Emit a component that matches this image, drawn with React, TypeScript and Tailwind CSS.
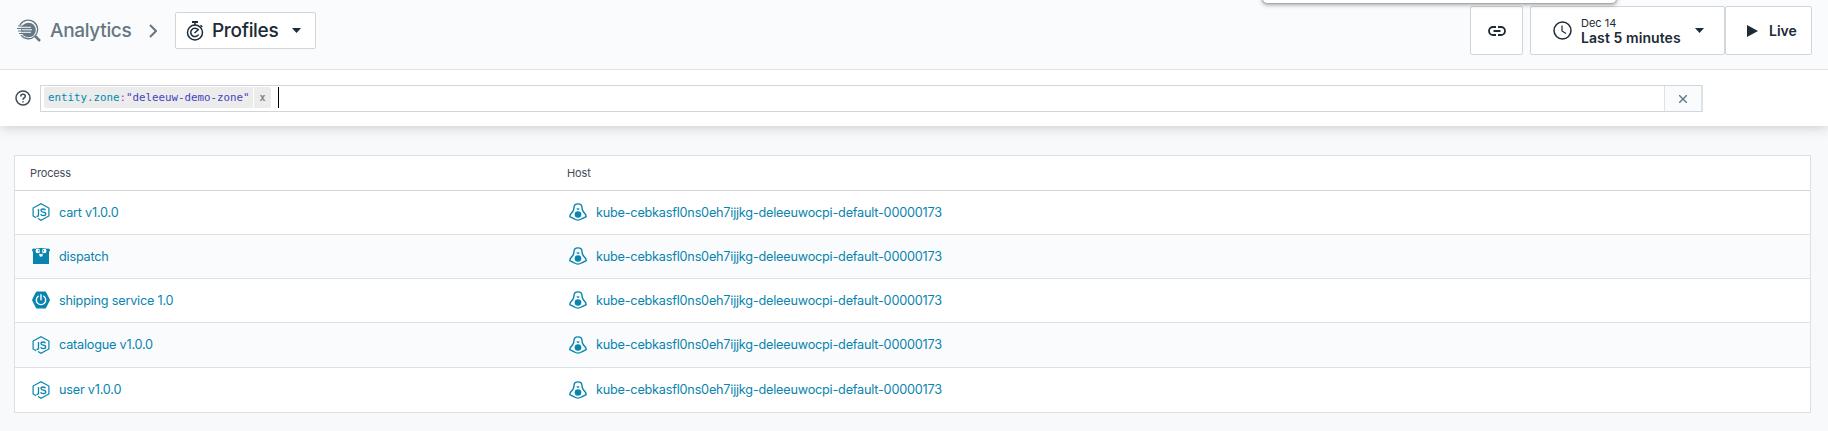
import React from "react";

const NodeIcon = () => (
  <svg className="size-[18px]" viewBox="0 0 18 18" fill="none" stroke="currentColor" strokeWidth="1.2">
    <path d="M4.200 14.700 1.100 12.900V5.100L9 .7l7.900 4.400v7.800L9 17.300l-3-1.700" />
    <path d="M6.500 6v6q0 1.600-2 1.200M13.500 7.300Q13 6 11.200 6 9 6 9 7.500 9 8.900 11.300 9.200 13.700 9.500 13.700 11 13.700 12.600 11.400 12.600 9 12.600 8.700 11.200" strokeWidth="1.300" />
  </svg>
);

const GopherIcon = () => (
  <svg className="size-[18px]" viewBox="0 0 18 18" fill="currentColor">
    <path d="M0 2.600Q1 1.200 3 1.700Q9 .2 15 1.700 17 1.200 18 2.600 17.900 4.300 17 4.800V17H1V4.800Q.1 4.300 0 2.600Z" />
    <g fill="#fff"><circle cx="5.800" cy="4" r="2.300" /><circle cx="12.200" cy="4" r="2.300" /><ellipse cx="9" cy="7.800" rx="1.800" ry="1.900" /></g>
    <circle cx="6.600" cy="3.800" r=".8" /><circle cx="11.400" cy="3.800" r=".8" /><ellipse cx="9" cy="6.600" rx="1.200" ry=".7" />
  </svg>
);

const SpringIcon = () => (
  <svg className="size-[18px]" viewBox="0 0 18 18">
    <path d="M5 .5h8q.7 0 1 .6L17.700 8.200q.4.800 0 1.600L14 16.900q-.3.600-1 .6H5q-.7 0-1-.6L.3 9.800Q-.1 9 .3 8.200L4 1.100Q4.300.5 5 .5Z" fill="currentColor" />
    <path d="M6.200 5.200a4.700 4.700 0 1 0 5.600 0M9 3.800v5" fill="none" stroke="#fff" strokeWidth="1.400" strokeLinecap="round" />
  </svg>
);

const HostIcon = () => (
  <svg className="size-[18px]" viewBox="0 0 18 18" fill="none" stroke="currentColor" strokeWidth="1.400">
    <path d="M5.200 15.800.8 13.600 1.300 11.600 3.800 8.500Q5 6.500 5 4.500 5 .9 9 .9t4 3.600Q13 6.500 14.200 8.500l2.500 3.100.5 2-4.400 2.200Q9 18.500 5.200 15.800Z" />
    <circle cx="9" cy="11.500" r="3.300" fill="currentColor" stroke="none" />
    <path d="M7.100 5.700q1.900-.8 3.800 0L9 7.200Z" fill="currentColor" stroke="none" />
  </svg>
);

const AnalyticsIcon = () => (
  <svg className="h-6 w-6" viewBox="0 0 24 24" fill="none" stroke="currentColor">
    <path d="M3 6.300A9.300 9.300 0 1 1 4 16.200" strokeWidth="1.300" />
    <circle cx="11.500" cy="11" r="7.300" fill="currentColor" stroke="none" />
    <path d="M5 8.300h9M5 10.800h10M5 13.300h9" stroke="#fafbfd" strokeWidth="1" />
    <path d="M1 7h5M0 9.500h6M1 12h5M2 14.500h5" strokeWidth="1.200" />
    <path d="m18 17 5 5" strokeWidth="2.500" />
  </svg>
);

const StopwatchIcon = () => (
  <svg className="h-5 w-[18px]" viewBox="0 0 18 20" fill="none" stroke="currentColor" strokeWidth="1.500">
    <circle cx="9" cy="11.500" r="7.500" />
    <path d="M6 1h6" strokeWidth="2" />
    <path d="M9 1v3M14.500 4.200l1.800 1.800" />
    <path d="M12 8.500A4.200 4.200 0 1 0 12.600 13.500M8.500 12l4.300-3.800" />
  </svg>
);

const Caret = () => (
  <svg className="h-[5px] w-[9px]" viewBox="0 0 9 5" fill="currentColor"><path d="M0 0h9L4.500 5Z" /></svg>
);

const rows = [
  { name: "cart v1.0.0", Icon: NodeIcon, style: "h-11 bg-white" },
  { name: "dispatch", Icon: GopherIcon, style: "h-11 bg-[#fafbfd]" },
  { name: "shipping service 1.0", Icon: SpringIcon, style: "h-11 bg-white" },
  { name: "catalogue v1.0.0", Icon: NodeIcon, style: "h-[45px] bg-[#fafbfd]" },
  { name: "user v1.0.0", Icon: NodeIcon, style: "h-11 bg-white" },
];

export default function App() {
  return (
    <div className="relative flex h-[431px] w-full flex-col overflow-hidden bg-[#f7f9fb] font-['Inter',sans-serif] text-[#1c2b36]">
      <div className="absolute -top-5 left-[1262px] z-20 h-6 w-[355px] rounded-[5px] border border-[#a5aaac] bg-white shadow-[0_1px_4px_rgba(0,0,0,0.35)]" />
      <header className="relative z-10 flex h-[70px] shrink-0 items-start border-b border-[#dfe3e6] bg-[#fafbfd] pr-4 pl-[17px]">
        <div className="mt-[18px] flex items-center text-[#667784]">
          <AnalyticsIcon />
          <span className="ml-[9px] w-[82px] pt-px text-[19px] leading-6 font-medium tracking-[-0.32px]">Analytics</span>
          <svg className="ml-[17px] h-[14px] w-2" viewBox="0 0 8 14" fill="none" stroke="currentColor" strokeWidth="2"><path d="m1 1 6 6-6 6" /></svg>
        </div>
        <button className="mt-3 ml-[18px] flex h-[37px] w-[141px] items-center rounded-[2px] border border-[#d2d6da] bg-white pl-[10px]">
          <StopwatchIcon />
          <span className="ml-[8px] w-[67px] text-left text-[19px] leading-6 font-medium tracking-[-0.32px]">Profiles</span>
          <span className="ml-[13px]"><Caret /></span>
        </button>
        <div className="mt-[6px] ml-auto flex">
          <button className="flex h-[49px] w-[53px] items-center justify-center rounded-[2px] border border-[#d2d6da] bg-white">
            <svg className="h-[10px] w-[18px]" viewBox="0 0 18 10" fill="none" stroke="currentColor" strokeWidth="1.800"><path d="M8 1H5a4 4 0 0 0 0 8h3M10 1h3a4 4 0 0 1 0 8h-3M5.500 5h7" /></svg>
          </button>
          <button className="ml-[7px] flex h-[49px] w-[195px] items-center rounded-[2px] border border-[#d2d6da] bg-white pl-[22px]">
            <svg className="size-[19px]" viewBox="0 0 19 19" fill="none" stroke="currentColor" strokeWidth="1.500"><circle cx="9.500" cy="9.500" r="8.500" /><path d="M9 4.500V10l4 2.500" strokeWidth="1.200" /></svg>
            <span className="ml-[9px] flex w-[100px] flex-col text-left whitespace-nowrap">
              <span className="text-[11px] leading-[14px]">Dec 14</span>
              <span className="text-[14px] leading-4 font-semibold tracking-[0.08px]">Last 5 minutes</span>
            </span>
            <span className="ml-[14px]"><Caret /></span>
          </button>
          <button className="flex h-[49px] w-[87px] items-center rounded-[2px] border border-[#d2d6da] bg-white pl-[21px]">
            <svg className="h-3 w-[11px]" viewBox="0 0 11 12" fill="currentColor"><path d="M0 0 11 6 0 12Z" /></svg>
            <span className="ml-[11px] text-[14px] font-semibold">Live</span>
          </button>
        </div>
      </header>
      <section className="flex h-14 shrink-0 items-start bg-white pt-[15px] pl-[15px] shadow-[0_0_12px_rgba(60,75,85,0.3)]">
        <svg className="mt-[5px] size-4" viewBox="0 0 16 16" fill="none" stroke="#3f4b55" strokeWidth="1.500"><circle cx="8" cy="8" r="7" /><path d="M5.700 6.500Q5.700 4.300 8 4.300t2.300 2Q10.300 7.300 9 8 8 8.600 8 9.800M8 11.200v1.400" /></svg>
        <div className="ml-[9px] flex h-[27px] w-[1663px] border border-r-2 border-[#d2d6da] border-r-[#dce4ea]">
          <div className="mt-px ml-[3px] flex h-[21px] items-center font-['DejaVu_Sans_Mono',monospace] text-[10.8px]">
            <span className="flex h-full w-[209px] items-center rounded-l-[2px] bg-[#ececec] pt-[2px] pl-1 whitespace-pre"><span className="text-[#008aae]">entity.zone</span><span className="text-[#a33bd0]">:</span><span className="text-[#4445bd]">"deleeuw-demo-zone"</span></span>
            <span className="ml-px flex h-full w-[17px] items-center justify-center rounded-r-[2px] bg-[#ececec] text-[10px] font-bold text-[#85898c]">x</span>
            <span className="ml-[7px] h-[21px] w-px bg-black" />
          </div>
          <div className="ml-auto flex w-[37px] items-center justify-center border-l border-[#dce4ea] bg-[#fafbfd]">
            <svg className="size-2" viewBox="0 0 8 8" stroke="#647580" strokeWidth="1.400"><path d="m0 0 8 8M8 0 0 8" /></svg>
          </div>
        </div>
      </section>
      <main className="mt-[29px] ml-[14px] w-[1797px] border border-[#dce1e5] bg-white">
        <div className="flex h-[35px] items-center border-b border-[#d2d6da] pt-px text-[11px] text-[#3f4b55]">
          <span className="w-[537px] pl-[15px] tracking-[-0.15px]">Process</span><span className="pl-[15px] tracking-[-0.1px]">Host</span>
        </div>
        {rows.map(({ name, Icon, style }) => (
          <div key={name} className={`flex items-center border-b border-[#dce1e5] text-[12.7px] tracking-[-0.22px] text-[#0884ae] last:border-b-0 ${style}`}>
            <div className="flex w-[537px] items-center gap-[9.500px] pl-[16.500px]"><Icon /><span>{name}</span></div>
            <div className="flex items-center gap-[9.500px] pl-[16.500px]"><HostIcon /><span>kube-cebkasfl0ns0eh7ijjkg-deleeuwocpi-default-00000173</span></div>
          </div>
        ))}
      </main>
    </div>
  );
}
